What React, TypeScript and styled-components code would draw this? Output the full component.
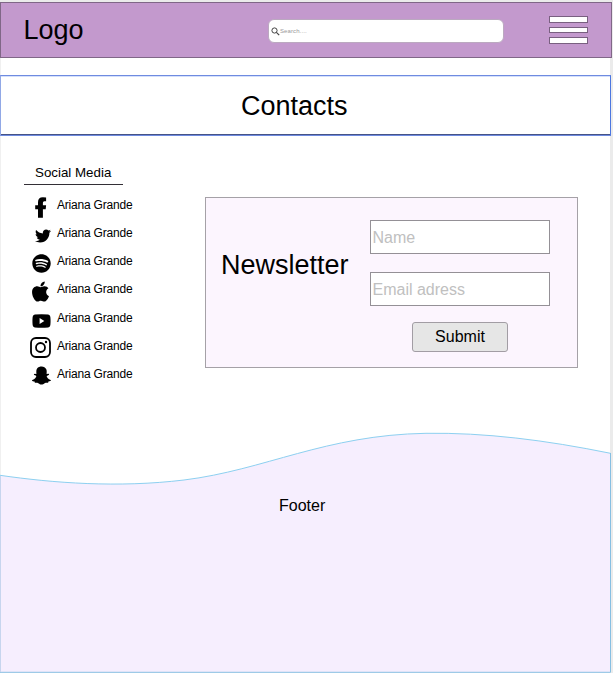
import React from "react";
import styled, { createGlobalStyle } from "styled-components";
import { FaApple, FaSnapchatGhost, FaSpotify, FaTwitter } from "react-icons/fa";

const GlobalStyle = createGlobalStyle`
  * { box-sizing: border-box; }
  body {
    margin: 0;
    background: #ebebeb;
    font-family: "Liberation Sans", Arial, sans-serif;
    color: #000;
    overflow: hidden;
  }
`;

const Page = styled.div`
  width: 613px;
  height: 673px;
  padding-top: 2px;
  display: flex;
  flex-direction: column;
  background: linear-gradient(to bottom, #ebebeb 2px, transparent 2px),
    linear-gradient(to right, #f0f0f0 1px, #fff 1px, #fff 610px, #ebebeb 610px);
`;

const Header = styled.header`
  width: 612px;
  height: 56px;
  flex: none;
  display: flex;
  align-items: center;
  background: #c399cd;
  border: 1px solid #806787;
  padding: 0 23px 0 22.5px;
`;

const Logo = styled.div`
  width: 244.5px;
  font-size: 27px;
  line-height: 30px;
`;

const SearchBox = styled.label`
  width: 236px;
  height: 24px;
  display: flex;
  align-items: center;
  background: #fff;
  border: 1px solid #bba9c0;
  border-radius: 6px;
  padding-left: 2px;
  margin-top: 2px;
`;

const SearchText = styled.span`
  font-size: 6px;
  line-height: 8px;
  letter-spacing: 0.1px;
  color: #999;
`;

const MenuButton = styled.div`
  width: 39px;
  margin-left: auto;
  display: flex;
  flex-direction: column;
  gap: 4px;
`;

const MenuBar = styled.span<{ $tall?: boolean }>`
  height: ${(p) => (p.$tall ? 7 : 6)}px;
  background: #fff;
  border: 1px solid #796080;
`;

const TitleBar = styled.section`
  width: 611px;
  height: 61px;
  margin-top: 17px;
  flex: none;
  border: 1px solid #6f8be0;
  border-left-color: #91a8e6;
  border-right-color: #4c77e0;
  box-shadow: inset 0 1px #d5e0fb, inset 0 -1px #465486;
  background: #fff;
  padding-left: 240px;
`;

const Title = styled.h1`
  margin: 0;
  font-size: 27px;
  line-height: 61px;
  font-weight: 400;
`;

const Content = styled.main`
  height: 296px;
  flex: none;
  display: flex;
  align-items: flex-start;
`;

const Social = styled.aside`
  width: 205px;
  padding: 27px 0 0 24px;
`;

const SocialTitle = styled.h2`
  width: 99px;
  height: 22px;
  margin: 0 0 9px;
  padding-left: 11px;
  border-bottom: 1px solid #332f36;
  font-size: 13.33px;
  line-height: 20px;
  font-weight: 400;
`;

const SocialList = styled.ul`
  margin: 0;
  padding: 0;
  list-style: none;
`;

const SocialRow = styled.li`
  height: 28.15px;
  display: flex;
  align-items: flex-start;
`;

const IconSlot = styled.span<{ $x: number; $y: number }>`
  width: 33px;
  height: 28px;
  flex: none;
  padding: ${(p) => p.$y}px 0 0 ${(p) => p.$x}px;

  svg { display: block; }
`;

const SocialName = styled.span`
  font-size: 12px;
  line-height: 23px;
  letter-spacing: -0.2px;
  white-space: nowrap;
`;

const NewsletterCard = styled.section`
  width: 373px;
  height: 171px;
  margin-top: 61px;
  display: flex;
  background: #fcf5fe;
  border: 1px solid #a5a1a7;
`;

const NewsletterTitle = styled.h2`
  width: 164px;
  margin: 0;
  padding: 51px 0 0 15px;
  font-size: 27px;
  line-height: 32px;
  font-weight: 400;
`;

const Form = styled.form`
  width: 180px;
  padding-top: 22px;
  display: flex;
  flex-direction: column;
  align-items: flex-start;
`;

const Field = styled.input`
  width: 180px;
  height: 34px;
  margin: 0 0 18px;
  padding: 2px 2px 0 1.5px;
  border: 1px solid #949096;
  border-radius: 0;
  background: #fff;
  font: 16px "Liberation Sans", Arial, sans-serif;
  outline: none;

  &::placeholder { color: #c0c0c0; opacity: 1; }
`;

const Submit = styled.button`
  width: 96px;
  height: 30px;
  margin: -2px 0 0 42px;
  padding: 0;
  border: 1px solid #a29da4;
  border-radius: 3px;
  background: #e6e6e6;
  color: #000;
  font: 16px "Liberation Sans", Arial, sans-serif;
`;

const Footer = styled.footer`
  flex: 1;
  display: grid;
  width: 613px;
`;

const Wave = styled.svg`
  grid-area: 1 / 1;
  display: block;
`;

const FooterText = styled.span`
  grid-area: 1 / 1;
  padding: 63px 0 0 279px;
  font-size: 16px;
  line-height: 21px;
`;

const SearchIcon = () => (
  <svg width="9" height="9" viewBox="0 0 9 9" fill="none" stroke="#444">
    <circle cx="3.5" cy="3.5" r="2.6" strokeWidth="1" />
    <path d="M5.4 5.4 8.2 8.2" strokeWidth="1.2" />
  </svg>
);

const FacebookIcon = () => (
  <svg width="12" height="21" viewBox="0 0 12 21">
    <path d="M3 20.7v-8.4H.2V8.2H3V5.2Q3 .3 7.9.2q2 0 3.2.3v3.7H9.3Q7.9 4.2 7.9 5.8v2.4h3.2l-.4 4.1H7.9v8.4Z" />
  </svg>
);

const YoutubeIcon = () => (
  <svg width="19" height="14" viewBox="0 0 20 14" preserveAspectRatio="none">
    <path
      fillRule="evenodd"
      d="M3 .5Q10-.2 17 .5q2 .2 2.3 2.2.5 4.3 0 8.6-.3 2-2.3 2.2-7 .6-14 0-2-.2-2.3-2.2-.5-4.3 0-8.6Q1 .7 3 .5ZM8 4v6l5-3Z"
    />
  </svg>
);

const InstagramIcon = () => (
  <svg width="21" height="21" viewBox="0 0 21 21" fill="none" stroke="#000" strokeWidth="1.8">
    <rect x="1" y="1" width="19" height="19" rx="5" />
    <circle cx="10.5" cy="10.5" r="4.5" />
    <circle cx="16" cy="5" r="1.2" fill="#000" stroke="none" />
  </svg>
);

const accounts = [
  { id: "facebook", icon: <FacebookIcon />, x: 11, y: 3 },
  { id: "twitter", icon: <FaTwitter size={16} />, x: 11, y: 6 },
  { id: "spotify", icon: <FaSpotify size={19} />, x: 8, y: 4 },
  { id: "apple", icon: <FaApple size={23} />, x: 5, y: 2 },
  { id: "youtube", icon: <YoutubeIcon />, x: 8, y: 7 },
  { id: "instagram", icon: <InstagramIcon />, x: 6, y: 2 },
  { id: "snapchat", icon: <FaSnapchatGhost size={19} />, x: 8, y: 3 },
];

export default function App() {
  return (
    <>
      <GlobalStyle />
      <Page>
        <Header>
          <Logo>Logo</Logo>
          <SearchBox>
            <SearchIcon />
            <SearchText>Search....</SearchText>
          </SearchBox>
          <MenuButton>
            <MenuBar $tall />
            <MenuBar />
            <MenuBar $tall />
          </MenuButton>
        </Header>
        <TitleBar>
          <Title>Contacts</Title>
        </TitleBar>
        <Content>
          <Social>
            <SocialTitle>Social Media</SocialTitle>
            <SocialList>
              {accounts.map((a) => (
                <SocialRow key={a.id}>
                  <IconSlot $x={a.x} $y={a.y}>{a.icon}</IconSlot>
                  <SocialName>Ariana Grande</SocialName>
                </SocialRow>
              ))}
            </SocialList>
          </Social>
          <NewsletterCard>
            <NewsletterTitle>Newsletter</NewsletterTitle>
            <Form>
              <Field placeholder="Name" />
              <Field placeholder="Email adress" />
              <Submit type="button">Submit</Submit>
            </Form>
          </NewsletterCard>
        </Content>
        <Footer>
          <Wave width="613" height="241" viewBox="0 432 613 241">
            <path
              d="M0 475.3C53 483 118 488 184 480C265 470 325 435 426 433.3C485 432.5 545 440 610.5 453.3V672.3H0Z"
              fill="#f6eefe"
            />
            <path
              d="M0 475.3C53 483 118 488 184 480C265 470 325 435 426 433.3C485 432.5 545 440 610.5 453.3"
              fill="none"
              stroke="#8dd0f0"
            />
            <path d="M610.5 453V672.3H0" fill="none" stroke="#86bfe2" />
            <path d="M.5 476V672" stroke="#c7d5ee" />
          </Wave>
          <FooterText>Footer</FooterText>
        </Footer>
      </Page>
    </>
  );
}
